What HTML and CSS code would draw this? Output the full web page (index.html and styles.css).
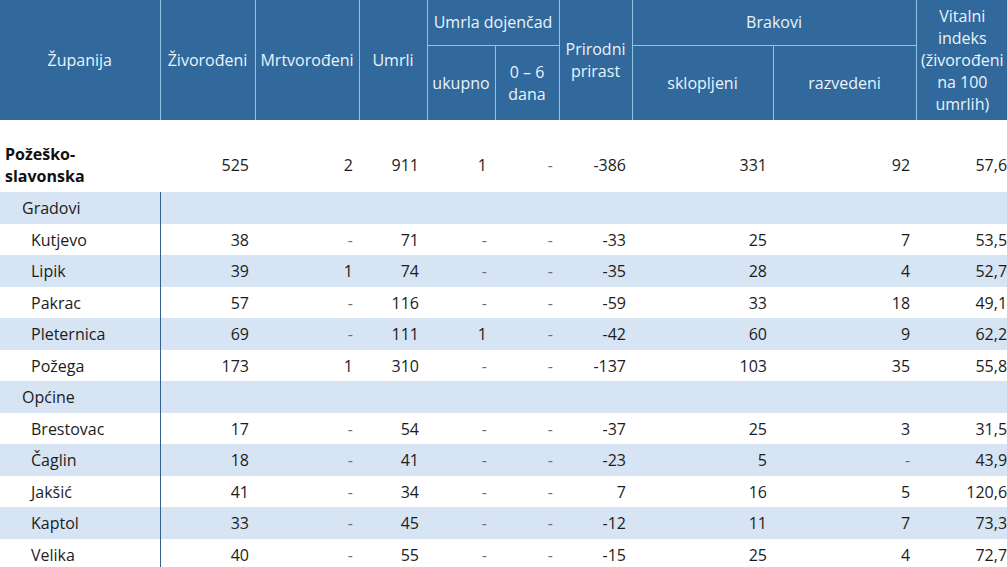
FILE: index.html
```html
<!DOCTYPE html>
<html lang="hr">
<head>
<meta charset="utf-8">
<title>Županija</title>
<link rel="stylesheet" href="styles.css">
</head>
<body>
<div class="wrap">
<table class="stats">
  <colgroup>
    <col class="c-name"><col class="c-zivo"><col class="c-mrtvo"><col class="c-umrli">
    <col class="c-uk"><col class="c-06"><col class="c-pp"><col class="c-skl">
    <col class="c-raz"><col class="c-vi">
  </colgroup>
  <thead>
    <tr class="h1">
      <th rowspan="2">Županija</th>
      <th rowspan="2">Živorođeni</th>
      <th rowspan="2">Mrtvorođeni</th>
      <th rowspan="2">Umrli</th>
      <th colspan="2">Umrla dojenčad</th>
      <th rowspan="2">Prirodni<br>prirast</th>
      <th colspan="2">Brakovi</th>
      <th rowspan="2" class="vi">Vitalni<br>indeks<br>(živorođeni<br>na 100<br>umrlih)</th>
    </tr>
    <tr class="h2">
      <th>ukupno</th>
      <th>0 – 6<br>dana</th>
      <th>sklopljeni</th>
      <th>razvedeni</th>
    </tr>
  </thead>
  <tbody>
    <tr class="total">
      <td class="name"><b>Požeško-<br>slavonska</b></td>
      <td>525</td><td>2</td><td class="p8">911</td><td class="p8">1</td><td class="d">-</td><td>-386</td><td>331</td><td>92</td><td class="last">57,6</td>
    </tr>
    <tr class="group odd">
      <td class="name">Gradovi</td><td></td><td></td><td></td><td></td><td></td><td></td><td></td><td></td><td></td>
    </tr>
    <tr>
      <td class="name sub">Kutjevo</td>
      <td>38</td><td class="d">-</td><td class="p8">71</td><td class="p8 d">-</td><td class="d">-</td><td>-33</td><td>25</td><td>7</td><td class="last">53,5</td>
    </tr>
    <tr class="odd">
      <td class="name sub">Lipik</td>
      <td>39</td><td>1</td><td class="p8">74</td><td class="p8 d">-</td><td class="d">-</td><td>-35</td><td>28</td><td>4</td><td class="last">52,7</td>
    </tr>
    <tr>
      <td class="name sub">Pakrac</td>
      <td>57</td><td class="d">-</td><td class="p8">116</td><td class="p8 d">-</td><td class="d">-</td><td>-59</td><td>33</td><td>18</td><td class="last">49,1</td>
    </tr>
    <tr class="odd">
      <td class="name sub">Pleternica</td>
      <td>69</td><td class="d">-</td><td class="p8">111</td><td class="p8">1</td><td class="d">-</td><td>-42</td><td>60</td><td>9</td><td class="last">62,2</td>
    </tr>
    <tr>
      <td class="name sub">Požega</td>
      <td>173</td><td>1</td><td class="p8">310</td><td class="p8 d">-</td><td class="d">-</td><td>-137</td><td>103</td><td>35</td><td class="last">55,8</td>
    </tr>
    <tr class="group odd">
      <td class="name">Općine</td><td></td><td></td><td></td><td></td><td></td><td></td><td></td><td></td><td></td>
    </tr>
    <tr>
      <td class="name sub">Brestovac</td>
      <td>17</td><td class="d">-</td><td class="p8">54</td><td class="p8 d">-</td><td class="d">-</td><td>-37</td><td>25</td><td>3</td><td class="last">31,5</td>
    </tr>
    <tr class="odd">
      <td class="name sub">Čaglin</td>
      <td>18</td><td class="d">-</td><td class="p8">41</td><td class="p8 d">-</td><td class="d">-</td><td>-23</td><td>5</td><td class="d">-</td><td class="last">43,9</td>
    </tr>
    <tr>
      <td class="name sub">Jakšić</td>
      <td>41</td><td class="d">-</td><td class="p8">34</td><td class="p8 d">-</td><td class="d">-</td><td>7</td><td>16</td><td>5</td><td class="last">120,6</td>
    </tr>
    <tr class="odd">
      <td class="name sub">Kaptol</td>
      <td>33</td><td class="d">-</td><td class="p8">45</td><td class="p8 d">-</td><td class="d">-</td><td>-12</td><td>11</td><td>7</td><td class="last">73,3</td>
    </tr>
    <tr>
      <td class="name sub">Velika</td>
      <td>40</td><td class="d">-</td><td class="p8">55</td><td class="p8 d">-</td><td class="d">-</td><td>-15</td><td>25</td><td>4</td><td class="last">72,7</td>
    </tr>
  </tbody>
</table>
</div>
</body>
</html>
```

FILE: styles.css
```css
html, body {
  margin: 0;
  padding: 0;
  background: #ffffff;
}

body {
  font-family: "Open Sans", "Noto Sans", sans-serif;
  font-size: 16px;
  line-height: 22px;
  color: #1c1c1c;
  overflow: hidden;
}

.wrap {
  width: 1007px;
  overflow: hidden;
}

.stats {
  border-collapse: collapse;
  table-layout: fixed;
  width: 1008px;
}

.c-name { width: 160px; }
.c-zivo { width: 95px; }
.c-mrtvo { width: 104px; }
.c-umrli { width: 68px; }
.c-uk { width: 68px; }
.c-06 { width: 64px; }
.c-pp { width: 73px; }
.c-skl { width: 141px; }
.c-raz { width: 143px; }
.c-vi { width: 92px; }

.stats th {
  background: #31699c;
  color: #eaf3fb;
  font-weight: normal;
  text-align: center;
  vertical-align: middle;
  padding: 0 1px;
  border: 1px solid #8fc2e6;
  white-space: nowrap;
}

.stats thead tr.h1 { height: 45px; }
.stats thead tr.h2 { height: 75px; }

.stats thead th:first-child { border-left: none; }
.stats thead tr.h1 th { border-top: none; }
.stats thead th { border-bottom: none; }
.stats th.vi { border-right: none; }

.stats td {
  text-align: right;
  padding: 5px 6px 4px 2px;
  height: 22px;
  line-height: 22px;
  white-space: nowrap;
}

.stats tr.odd td {
  background: #d6e4f3;
  padding-bottom: 5px;
}

.stats td.p8 { padding-right: 8px; }
.stats td.last { padding-right: 1px; }
.stats td.d { color: #6d6d6d; }

.stats td.name {
  text-align: left;
  padding-left: 5px;
}

.stats td.sub { padding-left: 31px; }
.stats tr.group td.name { padding-left: 22px; }

.stats tbody tr:not(.total) td.name {
  border-right: 1px solid #35608e;
}

.stats tr.total td {
  padding-top: 23px;
  padding-bottom: 5px;
  height: 44px;
  vertical-align: middle;
}

.stats tr.total b {
  font-weight: 700;
  color: #111;
}
```
